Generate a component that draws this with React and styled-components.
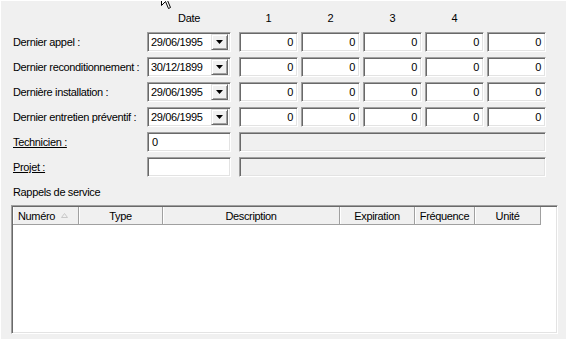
import React from "react"
import styled, { createGlobalStyle, css } from "styled-components"

const GlobalStyle = createGlobalStyle`
  html, body {
    margin: 0;
    padding: 0;
    background: #f0f0f0;
  }
  body {
    font-family: "Liberation Sans", Arial, sans-serif;
    font-size: 11px;
    letter-spacing: -0.35px;
    color: #000;
  }
`

const sunken = css`
  box-sizing: border-box;
  border: 1px solid;
  border-color: #a0a0a0 #ffffff #ffffff #a0a0a0;
  box-shadow: inset 1px 1px 0 #696969, inset -1px -1px 0 #e3e3e3;
`

const rows = [
  { label: "Dernier appel :", date: "29/06/1995" },
  { label: "Dernier reconditionnement :", date: "30/12/1899" },
  { label: "Dernière installation :", date: "29/06/1995" },
  { label: "Dernier entretien préventif :", date: "29/06/1995" },
]

const columns = [
  { title: "Numéro", width: 66, align: "left", sorted: true },
  { title: "Type", width: 84 },
  { title: "Description", width: 177 },
  { title: "Expiration", width: 75 },
  { title: "Fréquence", width: 60 },
  { title: "Unité", width: 66 },
]

export default function App() {
  return (
    <>
      <GlobalStyle />
      <Page>
        <TabGap />
        <Cursor viewBox="0 0 13 21" width="13" height="21">
          <path
            d="M0.5 0.5 L0.5 16.5 L4.5 12.5 L7.5 19.5 L9.5 18.5 L6.5 11.5 L11.5 11.5 Z"
            fill="#fff"
            stroke="#000"
            strokeWidth="1"
          />
        </Cursor>

        <HeaderRow>
          <LabelSpacer />
          <ColHead width={84}>Date</ColHead>
          <NumGroup>
            {["1", "2", "3", "4", ""].map((h, i) => (
              <ColHead key={i} width={59}>
                {h}
              </ColHead>
            ))}
          </NumGroup>
        </HeaderRow>

        <Form>
          {rows.map((r) => (
            <FieldRow key={r.label}>
              <Label>{r.label}</Label>
              <DateBox>
                <DateText>{r.date}</DateText>
                <DropButton>
                  <svg width="7" height="4" viewBox="0 0 7 4">
                    <path d="M0 0 H7 L3.5 4 Z" fill="#000" />
                  </svg>
                </DropButton>
              </DateBox>
              <NumGroup>
                {[0, 1, 2, 3, 4].map((i) => (
                  <NumBox key={i}>0</NumBox>
                ))}
              </NumGroup>
            </FieldRow>
          ))}

          <FieldRow>
            <Label underline>Technicien :</Label>
            <TextBox>0</TextBox>
            <WideBox />
          </FieldRow>
          <FieldRow>
            <Label underline>Projet :</Label>
            <TextBox />
            <WideBox />
          </FieldRow>
        </Form>

        <SectionLabel>Rappels de service</SectionLabel>
        <ListView>
          <ListHeader>
            {columns.map((c) => (
              <HeaderCell key={c.title} width={c.width} align={c.align}>
                {c.title}
                {c.sorted && (
                  <SortMark width="7" height="5" viewBox="0 0 7 5">
                    <path d="M3.5 0.5 L6.5 4.5 H0.5 Z" fill="none" stroke="#c8c8c8" />
                  </SortMark>
                )}
              </HeaderCell>
            ))}
          </ListHeader>
        </ListView>
      </Page>
    </>
  )
}

const Page = styled.div`
  position: relative;
  box-sizing: border-box;
  width: 566px;
  height: 339px;
  padding: 11px 0 0 10px;
  border-top: 1px solid #ffffff;
  border-left: 1px solid #ffffff;
  background: #f0f0f0;
  overflow: hidden;
`

const TabGap = styled.div`
  position: absolute;
  top: -1px;
  left: 143px;
  width: 52px;
  height: 1px;
  background: #f0f0f0;
`

const Cursor = styled.svg`
  position: absolute;
  top: -12px;
  left: 160px;
`

const HeaderRow = styled.div`
  display: flex;
  height: 13px;
  line-height: 13px;
  margin-bottom: 7px;
`

const LabelSpacer = styled.div`
  width: 136px;
`

const ColHead = styled.div`
  width: ${({ width }) => width}px;
  text-align: center;
`

const Form = styled.div`
  display: flex;
  flex-direction: column;
  gap: 5px;
`

const FieldRow = styled.div`
  display: flex;
  align-items: center;
  height: 20px;
`

const Label = styled.div`
  box-sizing: border-box;
  width: 136px;
  padding-left: 2px;
  white-space: nowrap;
  text-decoration: ${({ underline }) => (underline ? "underline" : "none")};
`

const DateBox = styled.div`
  ${sunken};
  display: flex;
  align-items: center;
  width: 84px;
  height: 20px;
  padding: 2px;
  background: #fff;
`

const DateText = styled.span`
  flex: 1;
  padding-left: 1px;
`

const DropButton = styled.div`
  box-sizing: border-box;
  display: flex;
  align-items: center;
  justify-content: center;
  width: 17px;
  height: 16px;
  background: #f0f0f0;
  border: 1px solid;
  border-color: #e3e3e3 #696969 #696969 #e3e3e3;
  box-shadow: inset 1px 1px 0 #fff, inset -1px -1px 0 #a0a0a0;
`

const NumGroup = styled.div`
  display: flex;
  gap: 3px;
  margin-left: 8px;
`

const NumBox = styled.div`
  ${sunken};
  width: 59px;
  height: 20px;
  padding: 0 4px;
  line-height: 18px;
  text-align: right;
  background: #fff;
`

const TextBox = styled.div`
  ${sunken};
  width: 84px;
  height: 20px;
  padding: 0 4px;
  line-height: 18px;
  background: #fff;
`

const WideBox = styled.div`
  ${sunken};
  width: 307px;
  height: 20px;
  margin-left: 8px;
  background: #f0f0f0;
`

const SectionLabel = styled.div`
  height: 13px;
  line-height: 13px;
  margin-top: 9px;
  padding-left: 2px;
`

const ListView = styled.div`
  ${sunken};
  width: 547px;
  height: 129px;
  margin-top: 6px;
  padding: 1px;
  background: #fff;
`

const ListHeader = styled.div`
  display: flex;
  height: 18px;
`

const HeaderCell = styled.div`
  box-sizing: border-box;
  display: flex;
  align-items: center;
  justify-content: ${({ align }) => (align === "left" ? "flex-start" : "center")};
  gap: 6px;
  width: ${({ width }) => width}px;
  padding-left: ${({ align }) => (align === "left" ? "5px" : "0")};
  background: #f0f0f0;
  border-right: 1px solid #a0a0a0;
  border-bottom: 1px solid #a0a0a0;
  box-shadow: inset 1px 0 0 #fff;
  white-space: nowrap;
`

const SortMark = styled.svg`
  display: block;
`
